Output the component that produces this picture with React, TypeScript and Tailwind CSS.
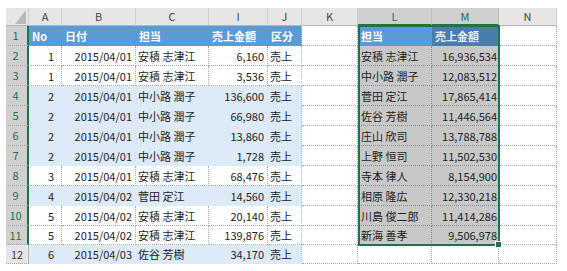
import React from 'react';

type Row = { no: number; date: string; name: string; amount: string };

const rows: Row[] = [
  { no: 1, date: '2015/04/01', name: '安積 志津江', amount: '6,160' },
  { no: 1, date: '2015/04/01', name: '安積 志津江', amount: '3,536' },
  { no: 2, date: '2015/04/01', name: '中小路 潤子', amount: '136,600' },
  { no: 2, date: '2015/04/01', name: '中小路 潤子', amount: '66,980' },
  { no: 2, date: '2015/04/01', name: '中小路 潤子', amount: '13,860' },
  { no: 2, date: '2015/04/01', name: '中小路 潤子', amount: '1,728' },
  { no: 3, date: '2015/04/01', name: '安積 志津江', amount: '68,476' },
  { no: 4, date: '2015/04/02', name: '菅田 定江', amount: '14,560' },
  { no: 5, date: '2015/04/02', name: '安積 志津江', amount: '20,140' },
  { no: 5, date: '2015/04/02', name: '安積 志津江', amount: '139,876' },
  { no: 6, date: '2015/04/03', name: '佐谷 芳樹', amount: '34,170' },
];

const summary: [string, string][] = [
  ['安積 志津江', '16,936,534'],
  ['中小路 潤子', '12,083,512'],
  ['菅田 定江', '17,865,414'],
  ['佐谷 芳樹', '11,446,564'],
  ['庄山 欣司', '13,788,788'],
  ['上野 恒司', '11,502,530'],
  ['寺本 律人', '8,154,900'],
  ['相原 隆広', '12,330,218'],
  ['川島 俊二郎', '11,414,286'],
  ['新海 善孝', '9,506,978'],
];

const letters = ['A', 'B', 'C', 'I', 'J', 'K', 'L', 'M', 'N'];

const grid = 'border-r border-b border-dotted border-[#a8a8a8]';
const cell = 'flex items-center overflow-hidden whitespace-nowrap pt-px';

function ColHeader({ label }: { label: string }) {
  const on = label === 'L' || label === 'M';
  return (
    <div
      className={
        on
          ? 'flex items-center justify-center bg-[#d0d0d0] text-[#217346] border-r border-r-[#bdbdbd] border-b-2 border-b-[#217346]'
          : 'flex items-center justify-center bg-[#e6e6e6] text-[#444] border-r border-r-[#cfcfcf] border-b border-b-[#b4b4b4]'
      }
    >
      {label}
    </div>
  );
}

function RowHeader({ n }: { n: number }) {
  const on = n <= 11;
  return (
    <div
      className={
        on
          ? 'flex items-center justify-center pr-[2px] bg-[#d0d0d0] text-[#217346] border-b border-dotted border-b-[#a8a8a8] border-r-2 [border-right-style:solid] border-r-[#217346]'
          : 'flex items-center justify-center bg-[#e6e6e6] text-[#444] border-b border-dotted border-b-[#a8a8a8] border-r [border-right-style:solid] border-r-[#b4b4b4]'
      }
    >
      {n}
    </div>
  );
}

export default function App() {
  return (
    <div className="w-[567px] h-[271px] bg-white pl-[6px] pt-[8px] text-[11px] leading-none text-[#222] [font-family:'Noto_Sans_CJK_JP',sans-serif]">
      <div className="relative w-[551px]">
        <div className="grid grid-cols-[23px_33px_74px_73px_59px_34px_56px_74px_67px_58px] grid-rows-[18px_repeat(10,20px)_19px_19px]">
          {/* corner */}
          <div className="relative bg-[#e6e6e6] border-r border-r-[#cfcfcf] border-b border-b-[#b4b4b4]">
            <svg className="absolute left-[9px] top-[2px]" width="11" height="14" viewBox="0 0 11 14">
              <polygon points="11,0 11,14 0,14" fill="#b9b9b9" />
            </svg>
          </div>
          {letters.map((l) => (
            <ColHeader key={l} label={l} />
          ))}

          {/* row 1: table headers */}
          <RowHeader n={1} />
          <div className={`${cell} pl-[3px] bg-[#5b9bd5] text-white font-bold`}>No</div>
          <div className={`${cell} pl-[3px] bg-[#5b9bd5] text-white font-bold`}>日付</div>
          <div className={`${cell} pl-[3px] bg-[#5b9bd5] text-white font-bold`}>担当</div>
          <div className={`${cell} pl-[3px] bg-[#5b9bd5] text-white font-bold`}>売上金額</div>
          <div className={`${cell} pl-[3px] bg-[#5b9bd5] text-white font-bold border-r border-dotted border-r-[#9bc2e6]`}>区分</div>
          <div className={grid} />
          <div className={`${cell} pl-[3px] bg-[#5b9bd5] text-white font-bold`}>担当</div>
          <div className={`${cell} pl-[3px] bg-[#4a7cac] text-[#e8eef5] font-bold`}>売上金額</div>
          <div className={grid} />

          {rows.map((r, i) => {
            const n = i + 2;
            const band = r.no % 2 === 0;
            const c = band
              ? 'bg-[#dcebf7] border-r border-b border-[#dcebf7]'
              : 'bg-white border-r border-b border-dotted border-[#a8a8a8]';
            const s = summary[i];
            return (
              <React.Fragment key={n}>
                <RowHeader n={n} />
                <div className={`${cell} ${c} justify-end pr-[7px]`}>{r.no}</div>
                <div className={`${cell} ${c} justify-end pr-[3px]`}>{r.date}</div>
                <div className={`${cell} ${c} pl-[2px]`}>{r.name}</div>
                <div className={`${cell} ${c} justify-end pr-[3px]`}>{r.amount}</div>
                <div className={`${cell} ${c} pl-[2px] border-dotted border-r-[#9bc2e6]`}>売上</div>
                <div className={grid} />
                {s ? (
                  <>
                    <div className={`${cell} pl-[3px] bg-[#c8c8c8] border-r border-b border-dotted border-[#8c8c8c]`}>{s[0]}</div>
                    <div className={`${cell} justify-end pr-[2px] bg-[#c8c8c8] border-b border-dotted border-[#8c8c8c]`}>{s[1]}</div>
                  </>
                ) : (
                  <>
                    <div className={grid} />
                    <div className={grid} />
                  </>
                )}
                <div className={grid} />
              </React.Fragment>
            );
          })}
        </div>

        {/* selection outline over L1:M11 */}
        <div className="pointer-events-none absolute left-[352px] top-[17px] w-[142px] h-[221px] border-2 border-[#217346]" />
        <div className="pointer-events-none absolute left-[490px] top-[234px] w-[5px] h-[5px] bg-[#217346] outline outline-1 outline-white" />
      </div>
    </div>
  );
}
